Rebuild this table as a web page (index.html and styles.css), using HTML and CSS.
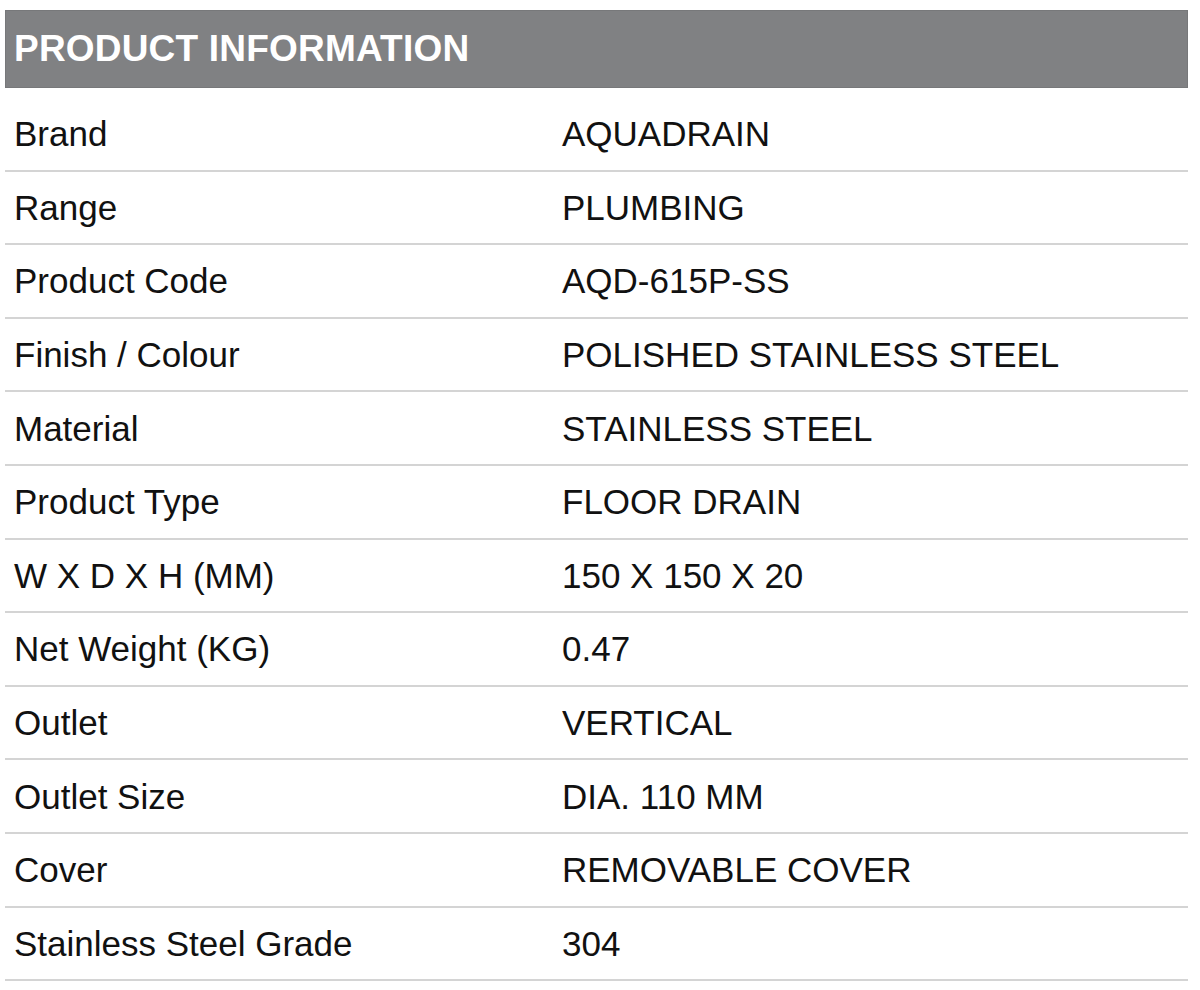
FILE: index.html
```html
<!DOCTYPE html>
<html>
<head>
<meta charset="utf-8">
<link rel="stylesheet" href="styles.css">
</head>
<body>
<div class="sheet">
  <div class="title">PRODUCT INFORMATION</div>
  <div class="rows">
    <div class="row"><span class="label">Brand</span><span class="value">AQUADRAIN</span></div>
    <div class="row"><span class="label">Range</span><span class="value">PLUMBING</span></div>
    <div class="row"><span class="label">Product Code</span><span class="value">AQD-615P-SS</span></div>
    <div class="row"><span class="label">Finish / Colour</span><span class="value">POLISHED STAINLESS STEEL</span></div>
    <div class="row"><span class="label">Material</span><span class="value">STAINLESS STEEL</span></div>
    <div class="row"><span class="label">Product Type</span><span class="value">FLOOR DRAIN</span></div>
    <div class="row"><span class="label">W X D X H (MM)</span><span class="value">150 X 150 X 20</span></div>
    <div class="row"><span class="label">Net Weight (KG)</span><span class="value">0.47</span></div>
    <div class="row"><span class="label">Outlet</span><span class="value">VERTICAL</span></div>
    <div class="row"><span class="label">Outlet Size</span><span class="value">DIA. 110 MM</span></div>
    <div class="row"><span class="label">Cover</span><span class="value">REMOVABLE COVER</span></div>
    <div class="row"><span class="label">Stainless Steel Grade</span><span class="value">304</span></div>
  </div>
</div>
</body>
</html>
```
FILE: styles.css
```css
html, body {
  margin: 0;
  padding: 0;
  background: #ffffff;
}
body {
  font-family: "Liberation Sans", Arial, sans-serif;
  color: #111111;
}
.sheet {
  margin: 10px 0 0 5px;
  width: 1183px;
}
.title {
  box-sizing: border-box;
  height: 78px;
  background: #808183;
  border: 1px solid #77787a;
  color: #ffffff;
  font-weight: bold;
  font-size: 37px;
  display: flex;
  align-items: center;
  padding-left: 8px;
  letter-spacing: 0.2px;
}
.rows {
  margin-top: 10px;
}
.row {
  box-sizing: border-box;
  height: 73.6px;
  border-bottom: 2px solid #d4d4d4;
  display: grid;
  grid-template-columns: 548px 1fr;
  align-items: center;
  padding-left: 9px;
  padding-top: 1px;
  font-size: 35px;
}
.label, .value {
  white-space: nowrap;
}
```
